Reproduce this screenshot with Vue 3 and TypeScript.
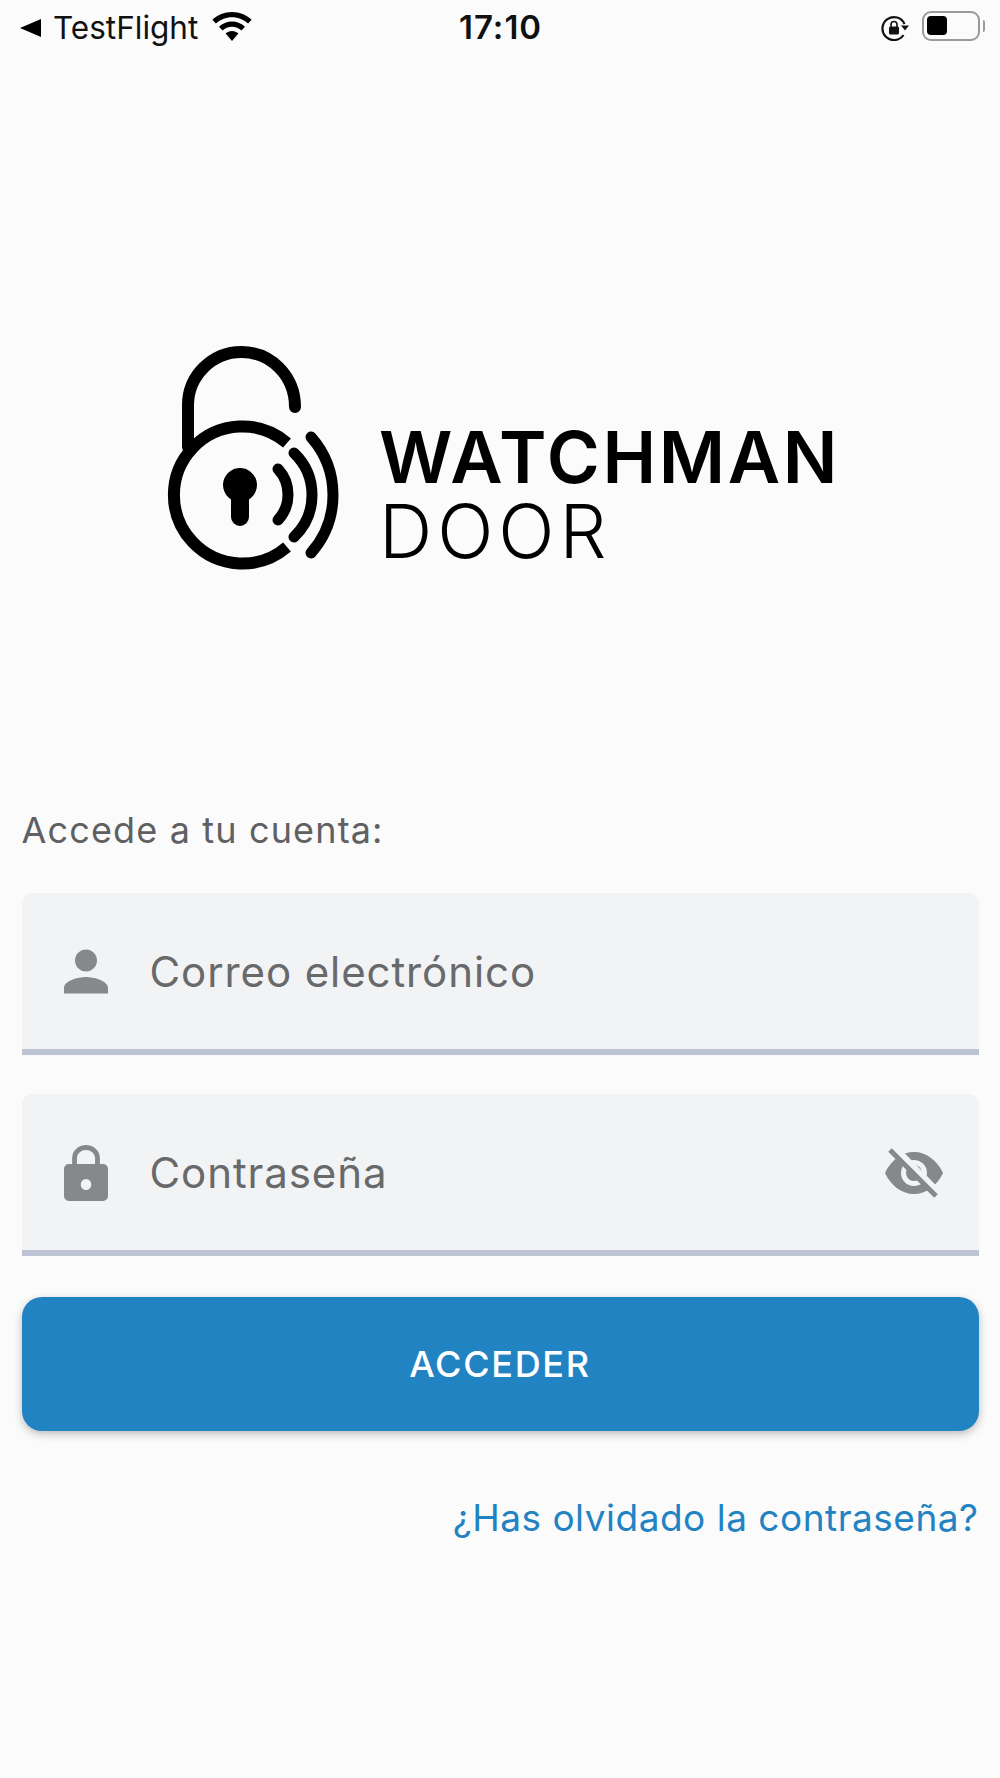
<template>
  <div class="screen">
    <div class="status">
      <div class="status-left">
        <svg class="back" viewBox="0 0 21 18"><path d="M0 9 21 0v18z" /></svg>
        <span class="app">TestFlight</span>
        <svg class="wifi" viewBox="0 0 40 29">
          <path d="M20 0C12.400 0 5.500 3 .4 7.800l3.500 3.800C8 7.700 13.700 5.200 20 5.200s12 2.500 16.100 6.400l3.500-3.800C34.500 3 27.600 0 20 0z" />
          <path d="M20 9.500c-5 0-9.600 2-13 5.200l3.500 3.800c2.500-2.300 5.800-3.800 9.500-3.800s7 1.500 9.500 3.800l3.500-3.800c-3.400-3.200-8-5.200-13-5.200z" />
          <path d="M20 19c-2.500 0-4.700 1-6.400 2.500L20 29l6.400-7.500C24.700 20 22.500 19 20 19z" />
        </svg>
      </div>
      <span class="time">17:10</span>
      <div class="status-right">
        <svg class="rotation" viewBox="0 0 28 26">
          <path d="M23.500 9A11.500 11.500 0 1 0 22.500 20" fill="none" stroke="#111" stroke-width="2.200" />
          <path d="M20 10.500h8l-4 5z" fill="#111" />
          <rect x="8" y="11.500" width="10" height="8" rx="1.500" fill="#111" />
          <path d="M10 12V9.500a3 3 0 0 1 6 0V12" fill="none" stroke="#111" stroke-width="1.600" />
        </svg>
        <div class="battery"><div class="battery-level"></div></div>
        <div class="battery-nub"></div>
      </div>
    </div>

    <div class="logo">
      <svg class="lock-mark" viewBox="0 0 190 232">
        <g fill="none" stroke="#000" stroke-width="12" stroke-linecap="round">
          <path d="M25 105V63C25 34 49 10 78.500 10S132 34 132 65" />
          <path d="M124 101A68.500 68.500 0 1 0 124 205" stroke-linecap="butt" />
          <path d="M115 127A37.500 37.500 0 0 1 115 178" stroke-width="11" />
          <path d="M131 111A58 58 0 0 1 131 195" stroke-width="11" />
          <path d="M148 95A87.500 87.500 0 0 1 148 211" stroke-width="11" />
        </g>
        <path d="M77 126a17 17 0 0 1 9 31.400V175a9 9 0 0 1-18 0v-17.600a17 17 0 0 1 9-31.400z" />
      </svg>
      <div class="logo-text">
        <span class="logo-top">WATCHMAN</span>
        <span class="logo-bottom">DOOR</span>
      </div>
    </div>

    <form class="login" @submit.prevent>
      <p class="intro">Accede a tu cuenta:</p>

      <div class="field">
        <svg class="person" viewBox="4 4 16 16"><path d="M12 12c2.210 0 4-1.790 4-4s-1.790-4-4-4-4 1.790-4 4 1.790 4 4 4zm0 2c-2.670 0-8 1.340-8 4v2h16v-2c0-2.660-5.330-4-8-4z" /></svg>
        <span class="placeholder">{{ emailLabel }}</span>
      </div>

      <div class="field second">
        <svg class="padlock" viewBox="0 0 46 56" preserveAspectRatio="none">
          <path fill-rule="evenodd" d="M5 19h36a5 5 0 0 1 5 5v27a5 5 0 0 1-5 5H5a5 5 0 0 1-5-5V24a5 5 0 0 1 5-5zm18 15a5.500 5.500 0 1 0 0 11 5.500 5.500 0 0 0 0-11z" />
          <path d="M11 21v-8a12 10.500 0 0 1 24 0v8" fill="none" stroke="#87888b" stroke-width="5" />
        </svg>
        <span class="placeholder">{{ passwordLabel }}</span>
        <svg class="eye" viewBox="0 0 60 50">
          <path fill-rule="evenodd" d="M1 25C7 12 18 4 30 4s23 8 29 21c-6 13-17 21-29 21S7 38 1 25zm29-13a13 13 0 1 0 0 26 13 13 0 0 0 0-26z" />
          <circle cx="30" cy="25" r="8" />
          <path d="M9 2 52 46" stroke="#f2f3f5" stroke-width="8" transform="translate(1.500 -1.500)" />
          <path d="M6 2 52 48" stroke="#87888b" stroke-width="5" />
        </svg>
      </div>

      <button class="submit" type="submit">ACCEDER</button>
      <a class="forgot" href="#">¿Has olvidado la contraseña?</a>
    </form>
  </div>
</template>

<script setup lang="ts">
const emailLabel: string = 'Correo electrónico'
const passwordLabel: string = 'Contraseña'
</script>

<style>
html,
body {
  margin: 0;
  background: #fbfbfb;
}
</style>

<style scoped>
.screen {
  width: 1000px;
  height: 1778px;
  box-sizing: border-box;
  background: #fbfbfb;
  font-family: Inter, "Liberation Sans", sans-serif;
  overflow: hidden;
}

.status {
  height: 55px;
  position: relative;
  display: flex;
  justify-content: space-between;
  align-items: flex-start;
  padding: 0 15px 0 20px;
  color: #111;
}

.status-left {
  display: flex;
  align-items: flex-start;
}

.back {
  width: 21px;
  height: 18px;
  margin-top: 19px;
}

.app {
  font-size: 31.500px;
  line-height: 34px;
  margin: 11px 0 0 12px;
}

.wifi {
  width: 40px;
  height: 29px;
  margin: 12px 0 0 14px;
}

.time {
  position: absolute;
  left: 459px;
  top: 10px;
  font-size: 33px;
  line-height: 34px;
  font-weight: 600;
  letter-spacing: 1px;
}

.status-right {
  display: flex;
  align-items: flex-start;
}

.rotation {
  width: 28px;
  height: 26px;
  margin: 15px 13px 0 0;
}

.battery {
  width: 58px;
  height: 30px;
  margin-top: 11px;
  box-sizing: border-box;
  border: 2.500px solid #9a9a9a;
  border-radius: 9px;
  padding: 3px;
}

.battery-level {
  width: 20px;
  height: 19px;
  background: #000;
  border-radius: 4px;
}

.battery-nub {
  width: 2.500px;
  height: 12px;
  margin: 20px 0 0 3px;
  background: #9a9a9a;
  border-radius: 0 2px 2px 0;
}

.logo {
  display: flex;
  align-items: flex-start;
  margin-top: 287px;
  padding-left: 163px;
  height: 240px;
}

.lock-mark {
  width: 190px;
  height: 232px;
  flex: none;
}

.logo-text {
  display: flex;
  flex-direction: column;
  margin: 79px 0 0 26px;
  color: #000;
}

.logo-top {
  font-size: 72px;
  line-height: 72px;
  font-weight: 600;
  letter-spacing: 2.600px;
}

.logo-bottom {
  font-size: 74px;
  line-height: 72px;
  font-weight: 300;
  letter-spacing: 5px;
  margin-top: 2px;
}

.login {
  display: flex;
  flex-direction: column;
  padding: 0 21.500px;
  margin-top: 227.500px;
}

.intro {
  margin: 0;
  font-size: 36px;
  line-height: 40px;
  letter-spacing: 1.150px;
  color: #5f6062;
}

.field {
  display: flex;
  align-items: center;
  height: 162px;
  margin-top: 43px;
  box-sizing: border-box;
  padding: 2px 35px 0 42px;
  background: #f2f3f5;
  border-bottom: 6px solid #bcc3d3;
  border-radius: 10px 10px 0 0;
}

.second {
  margin-top: 39px;
}

.field svg {
  fill: #87888b;
  flex: none;
}

.person {
  width: 44px;
  height: 45px;
}

.padlock {
  width: 44px;
  height: 56px;
}

.placeholder {
  font-size: 42px;
  letter-spacing: 0.900px;
  margin-left: 42px;
  color: #68696b;
}

.eye {
  width: 60px;
  height: 50px;
  margin-left: auto;
}

.submit {
  height: 134px;
  margin-top: 41px;
  border: none;
  border-radius: 20px;
  background: #2283c3;
  color: #fff;
  font-family: inherit;
  font-size: 36px;
  font-weight: 500;
  letter-spacing: 1.700px;
  box-shadow: 0 3px 8px rgba(0, 0, 0, 0.25);
}

.forgot {
  align-self: flex-end;
  margin-top: 65px;
  font-size: 37px;
  line-height: 44px;
  letter-spacing: 0.500px;
  color: #2283c3;
  text-decoration: none;
}
</style>
